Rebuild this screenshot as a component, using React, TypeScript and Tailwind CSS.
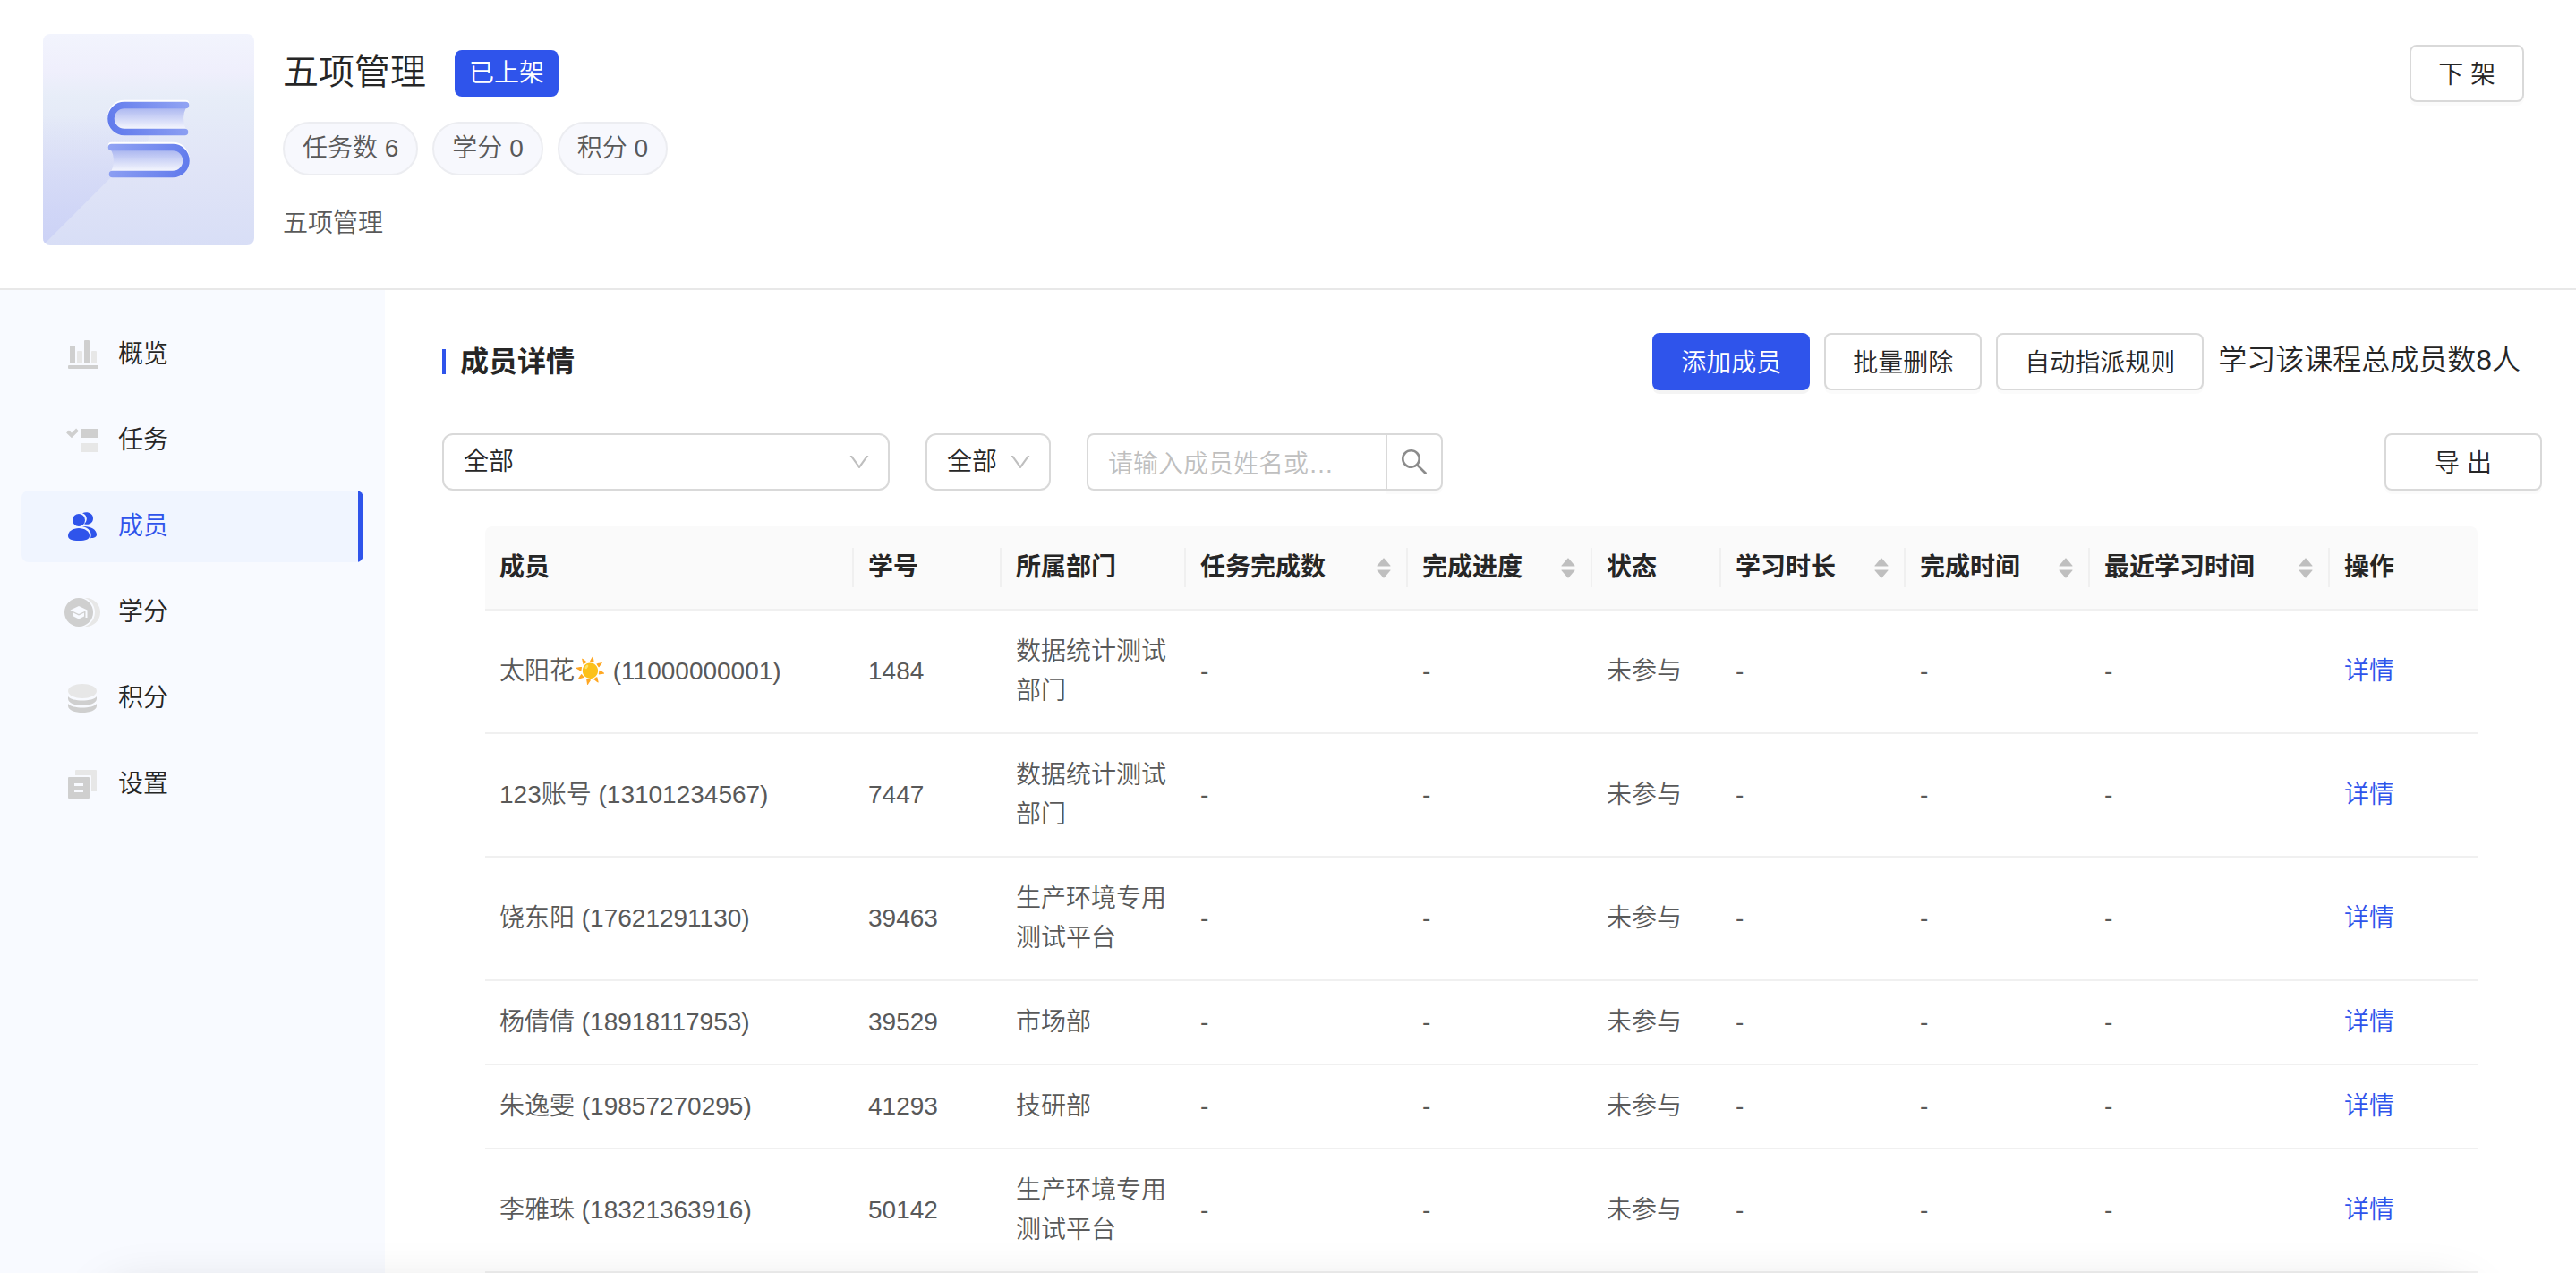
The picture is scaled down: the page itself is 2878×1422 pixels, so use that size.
import { useState } from "react";
import type { ReactNode } from "react";
import { AiFillCaretDown, AiFillCaretUp, AiOutlineDown, AiOutlineSearch } from "react-icons/ai";

const stats = ["任务数 6", "学分 0", "积分 0"];

const menu = [
  { label: "概览", Icon: OverviewIcon },
  { label: "任务", Icon: TaskIcon },
  { label: "成员", Icon: MemberIcon },
  { label: "学分", Icon: CreditIcon },
  { label: "积分", Icon: PointsIcon },
  { label: "设置", Icon: SettingsIcon },
];

const columns = [
  { title: "成员", width: "w-[412px]" },
  { title: "学号", width: "w-[165px]" },
  { title: "所属部门", width: "w-[206px]" },
  { title: "任务完成数", width: "w-[248px]", sortable: true },
  { title: "完成进度", width: "w-[206px]", sortable: true },
  { title: "状态", width: "w-[144px]" },
  { title: "学习时长", width: "w-[206px]", sortable: true },
  { title: "完成时间", width: "w-[206px]", sortable: true },
  { title: "最近学习时间", width: "w-[268px]", sortable: true },
  { title: "操作", width: "w-[165px]" },
];

const members = [
  { name: "太阳花☀️ (11000000001)", no: "1484", dept: "数据统计测试部门" },
  { name: "123账号 (13101234567)", no: "7447", dept: "数据统计测试部门" },
  { name: "饶东阳 (17621291130)", no: "39463", dept: "生产环境专用测试平台" },
  { name: "杨倩倩 (18918117953)", no: "39529", dept: "市场部" },
  { name: "朱逸雯 (19857270295)", no: "41293", dept: "技研部" },
  { name: "李雅珠 (18321363916)", no: "50142", dept: "生产环境专用测试平台" },
];

function OverviewIcon() {
  return (
    <svg width="40" height="32" viewBox="0 0 40 32" aria-hidden="true">
      <rect x="6" y="6" width="6" height="20" rx="1" fill="#cfcfcf" />
      <rect x="14" y="12" width="6" height="14" rx="1" fill="#e7e7e7" />
      <rect x="22" y="0" width="6" height="26" rx="1" fill="#cfcfcf" />
      <rect x="30" y="12" width="6" height="14" rx="1" fill="#e7e7e7" />
      <rect x="4" y="28" width="34" height="4" rx="1" fill="#cfcfcf" />
    </svg>
  );
}

function TaskIcon() {
  return (
    <svg width="40" height="32" viewBox="0 0 40 32" aria-hidden="true">
      <path d="M3.5 6 8 10.5 14.5 4" fill="none" stroke="#cfcfcf" strokeWidth="4" />
      <rect x="18" y="3" width="20" height="10" rx="1" fill="#cfcfcf" />
      <rect x="18" y="19" width="20" height="10" rx="1" fill="#e7e7e7" />
    </svg>
  );
}

function MemberIcon() {
  return (
    <svg width="40" height="32" viewBox="0 0 40 32" fill="#2f54eb" aria-hidden="true">
      <path d="M20 1.2C25-1.2 32 1 32 7c0 5.5-5 8-10 6.2 4.5-4 3.5-10-2-12z" />
      <path d="M20 16c8-.8 16 3 16 9 0 3-2.5 4-7 4.2C31.5 22.500 27 17.500 20 16z" />
      <circle cx="16" cy="9" r="7" />
      <path d="M4 26.500C4 21.500 9.500 18 16 18s12 3.500 12 8.500c0 4-4 5.500-12 5.500S4 30.500 4 26.500z" />
    </svg>
  );
}

function CreditIcon() {
  return (
    <svg width="40" height="32" viewBox="0 0 40 32" aria-hidden="true">
      <circle cx="24" cy="16" r="16" fill="#e7e7e7" />
      <circle cx="17" cy="16" r="17" fill="#f8faff" />
      <circle cx="16" cy="16" r="16" fill="#cfcfcf" />
      <path d="M16 9 6.5 13.5 16 18l7.5-3.500V22h2v-8.500zM10 16.500v4l6 3 6-3v-4l-6 3z" fill="#f8faff" />
    </svg>
  );
}

function PointsIcon() {
  return (
    <svg width="40" height="32" viewBox="0 0 40 32" aria-hidden="true">
      <ellipse cx="20" cy="8" rx="16" ry="8" fill="#e7e7e7" />
      <path d="M4 14c4 6 28 6 32 0v2.500c0 10-32 10-32 0z" fill="#cfcfcf" />
      <path d="M4 22c4 6 28 6 32 0v2.500c0 10-32 10-32 0z" fill="#cfcfcf" />
    </svg>
  );
}

function SettingsIcon() {
  return (
    <svg width="40" height="32" viewBox="0 0 40 32" aria-hidden="true">
      <path d="M13 0h22a1 1 0 0 1 1 1v23h-6V7a1 1 0 0 0-1-1H12V1a1 1 0 0 1 1-1z" fill="#e7e7e7" />
      <rect x="4" y="8" width="24" height="24" rx="1" fill="#cfcfcf" />
      <path d="M11 15h10v3H11zM11 22h10v3H11z" fill="#f8faff" />
    </svg>
  );
}

function Cover() {
  return (
    <svg className="size-[236px] shrink-0 rounded-lg" viewBox="0 0 236 236" aria-hidden="true">
      <defs>
        <linearGradient id="cover" x1="0" y1="0" x2="0" y2="1">
          <stop offset="0" stopColor="#f2f4fd" />
          <stop offset="0.18" stopColor="#efeffc" />
          <stop offset="0.3" stopColor="#e7edf8" />
          <stop offset="0.6" stopColor="#e1e5f7" />
          <stop offset="1" stopColor="#d8def6" />
        </linearGradient>
        <linearGradient id="fold" x1="0" y1="0" x2="0" y2="1">
          <stop offset="0" stopColor="#ccd2f6" stopOpacity="0" />
          <stop offset="1" stopColor="#ccd2f6" />
        </linearGradient>
        <linearGradient id="pages" x1="0" y1="0" x2="0" y2="1">
          <stop offset="0" stopColor="#a9b5f0" />
          <stop offset="1" stopColor="#f8f9fe" />
        </linearGradient>
        <linearGradient id="spine" gradientUnits="userSpaceOnUse" x1="73" y1="110" x2="163" y2="76">
          <stop offset="0" stopColor="#5f79ec" />
          <stop offset="1" stopColor="#92a4f3" />
        </linearGradient>
        <g id="book">
          <path d="M159.5 77.5H91a15 15 0 0 0-15 15" fill="none" stroke="#fff" strokeWidth="7.5" strokeLinecap="round" />
          <path d="M92 82h68q-6 12 0 25H92a12.5 12.5 0 0 1 0-25z" fill="url(#pages)" />
          <path d="M159.5 79.5H91a15 15 0 0 0 0 30h67.5" fill="none" stroke="url(#spine)" strokeWidth="7.5" strokeLinecap="round" />
        </g>
      </defs>
      <rect width="236" height="236" fill="url(#cover)" />
      <path d="M0 236 118 118V90H0z" fill="url(#fold)" />
      <use href="#book" />
      <use href="#book" transform="matrix(-1 0 0 1 236 47)" />
    </svg>
  );
}

function Button({ children, primary, className = "" }: { children: ReactNode; primary?: boolean; className?: string }) {
  const tone = primary
    ? "border-[#2f54eb] bg-[#2f54eb] text-white shadow-[0_4px_0_rgba(0,0,0,0.045)]"
    : "border-[#d9d9d9] bg-white shadow-[0_4px_0_rgba(0,0,0,0.015)]";
  return (
    <button type="button" className={`h-16 shrink-0 rounded-lg border-2 px-[30px] pt-1 whitespace-nowrap ${tone} ${className}`}>
      {children}
    </button>
  );
}

function FilterSelect({ label, className }: { label: string; className: string }) {
  return (
    <div className={`relative ${className}`}>
      <select
        aria-label={label}
        className="block h-16 w-full appearance-none rounded-xl border-2 border-[#d9d9d9] bg-white pr-12 pl-[22px]"
      >
        <option>全部</option>
      </select>
      <AiOutlineDown size={28} className="pointer-events-none absolute top-[18px] right-5 text-[#bfbfbf]" />
    </div>
  );
}

export default function App() {
  const [active, setActive] = useState("成员");

  return (
    <div className="flex min-h-screen flex-col overflow-x-hidden bg-white font-['Liberation_Sans','Noto_Sans_CJK_SC',sans-serif] text-[28px] leading-[44px] font-[350] text-[#262626]">
      <header className="flex items-start border-b-2 border-[#e8e8e8] pt-[38px] pr-[58px] pb-12 pl-12">
        <Cover />
        <div className="ml-8 flex-1 pt-3">
          <div className="flex items-center gap-8">
            <h1 className="text-[40px] leading-[60px]">五项管理</h1>
            <span className="mt-1 rounded-lg bg-[#2f54eb] px-4 py-1 text-white">已上架</span>
          </div>
          <ul className="mt-[26px] flex gap-4 text-[#595959]">
            {stats.map((stat) => (
              <li key={stat} className="rounded-full border-2 border-[#ecedf1] bg-[#f7f8fd] px-5 py-1.5">
                {stat}
              </li>
            ))}
          </ul>
          <p className="mt-8 text-[#595959]">五项管理</p>
        </div>
        <Button className="mt-3">下 架</Button>
      </header>

      <div className="flex flex-1">
        <nav className="flex w-[430px] shrink-0 flex-col gap-4 bg-[#f8faff] px-6 pt-8">
          {menu.map(({ label, Icon }) => (
            <button
              key={label}
              type="button"
              onClick={() => setActive(label)}
              className={`flex h-20 items-center gap-5 overflow-hidden rounded-lg pl-12 ${
                label === active ? "bg-[#f0f5ff] text-[#2f54eb]" : ""
              }`}
            >
              <Icon />
              {label}
              {label === active && <span className="ml-auto h-full w-1.5 bg-[#2f54eb]" />}
            </button>
          ))}
        </nav>

        <main className="min-w-0 flex-1 pt-12 pr-[38px] pl-16">
          <div className="flex items-center gap-4 pr-6">
            <div className="flex flex-1 items-center gap-4">
              <span className="h-7 w-1 bg-[#2f54eb]" />
              <h2 className="text-[32px] font-bold">成员详情</h2>
            </div>
            <Button primary>添加成员</Button>
            <Button>批量删除</Button>
            <Button>自动指派规则</Button>
            <span className="pb-1 text-[32px] whitespace-nowrap">学习该课程总成员数8人</span>
          </div>

          <div className="mt-12 flex items-center gap-10">
            <FilterSelect label="部门" className="w-[500px]" />
            <FilterSelect label="状态" className="w-[140px]" />
            <form className="flex">
              <input
                type="text"
                aria-label="搜索成员"
                placeholder="请输入成员姓名或…"
                className="h-16 w-[336px] rounded-l-lg border-2 border-[#d9d9d9] px-[22px] pt-1.5 placeholder:text-[#bfbfbf]"
              />
              <button
                type="button"
                aria-label="搜索"
                className="-ml-0.5 flex h-16 w-16 items-center justify-center rounded-r-lg border-2 border-[#d9d9d9] text-[#8c8c8c] shadow-[0_4px_0_rgba(0,0,0,0.015)]"
              >
                <AiOutlineSearch size={36} />
              </button>
            </form>
            <Button className="ml-auto w-44">导 出</Button>
          </div>

          <div className="mt-10 pr-[72px] pl-12">
            <table className="w-full table-fixed border-separate border-spacing-0 text-left text-[#595959]">
              <thead className="text-[#262626]">
                <tr>
                  {columns.map((col, i) => (
                    <th
                      key={col.title}
                      className={`border-b-2 border-[#f0f0f0] bg-[#fafafa] py-6 font-bold first:rounded-tl-lg last:rounded-tr-lg ${col.width}`}
                    >
                      <div
                        className={`flex h-11 items-center justify-between pr-3.5 pl-4 ${
                          i < columns.length - 1 ? "border-r-2 border-[#f0f0f0]" : ""
                        }`}
                      >
                        {col.title}
                        {col.sortable && (
                          <button type="button" aria-label={`按${col.title}排序`} className="flex flex-col text-[#bfbfbf]">
                            <AiFillCaretUp size={22} />
                            <AiFillCaretDown size={22} className="-mt-[9px]" />
                          </button>
                        )}
                      </div>
                    </th>
                  ))}
                </tr>
              </thead>
              <tbody>
                {members.map((member) => (
                  <tr key={member.no} className="*:border-b-2 *:border-[#f0f0f0] *:px-4 *:py-6">
                    <td>{member.name}</td>
                    <td>{member.no}</td>
                    <td>{member.dept}</td>
                    <td>-</td>
                    <td>-</td>
                    <td>未参与</td>
                    <td>-</td>
                    <td>-</td>
                    <td>-</td>
                    <td>
                      <a href="#detail" className="text-[#2f54eb]">
                        详情
                      </a>
                    </td>
                  </tr>
                ))}
              </tbody>
            </table>
          </div>
        </main>
      </div>

      <div className="pointer-events-none fixed inset-x-[120px] -bottom-[84px] h-[60px] rounded-3xl shadow-[0_0_60px_rgba(0,0,0,0.18)]" />
    </div>
  );
}
